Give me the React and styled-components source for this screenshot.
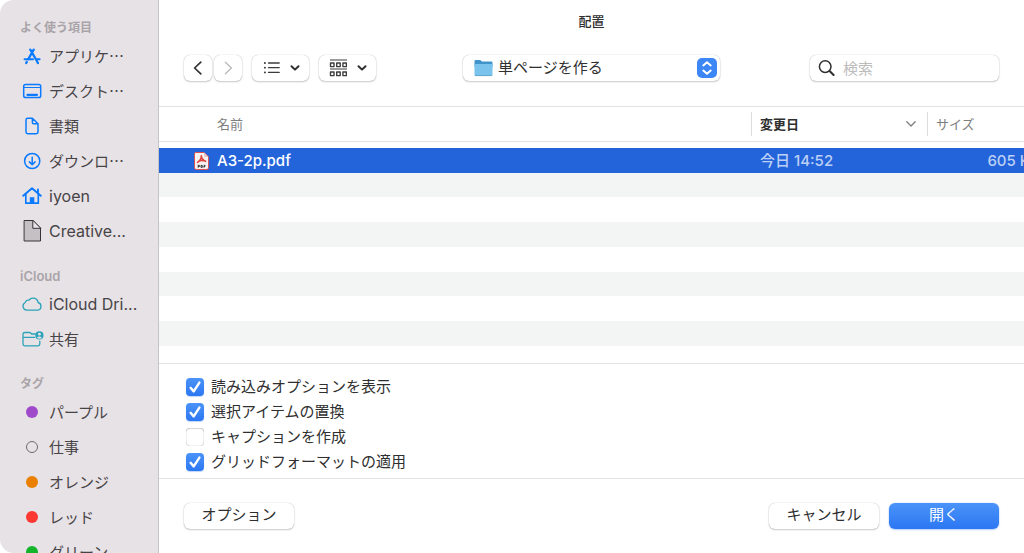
import { useState } from 'react'
import styled, { createGlobalStyle, css } from 'styled-components'

const colors = {
  sidebar: '#e7e2e6',
  text: '#2f2f2f',
  sidebarText: '#474447',
  muted: '#a9a4a8',
  line: '#e3e3e3',
  stripe: '#f3f5f4',
  selected: '#2464da',
  blue: '#0a7aff',
  teal: '#2ba3b8',
}

const latinFont = `Inter, 'Noto Sans CJK JP', sans-serif`
const japaneseFont = `'Noto Sans CJK JP', Inter, sans-serif`

const GlobalStyle = createGlobalStyle`
  * {
    box-sizing: border-box;
  }
  body {
    margin: 0;
    background: #ffffff;
    color: ${colors.text};
    font-family: ${latinFont};
    font-size: 15px;
  }
  button, input, select {
    font: inherit;
    color: inherit;
  }
`

const Dialog = styled.div`
  display: flex;
  height: 100vh;
  overflow: hidden;
  background: #ffffff;
`

const Sidebar = styled.nav`
  flex: 0 0 159px;
  display: flex;
  flex-direction: column;
  gap: 18px;
  padding: 18px 16px 0 20px;
  overflow: hidden;
  background: ${colors.sidebar};
  border-right: 1px solid #c6c3c7;
  border-radius: 14px 0 0 14px;
`

const SidebarSection = styled.section`
  flex: none;
`

const SidebarHeading = styled.h2`
  margin: 0;
  font-size: ${({ $latin }) => ($latin ? '13px' : '12px')};
  font-weight: 600;
  line-height: 20px;
  color: ${colors.muted};
`

const SidebarList = styled.ul`
  margin: 0;
  padding: 0;
  list-style: none;
`

const SidebarLink = styled.a`
  display: flex;
  align-items: center;
  gap: 5px;
  height: 35px;
  font-family: ${({ $japanese }) => ($japanese ? japaneseFont : latinFont)};
  font-size: ${({ $japanese }) => ($japanese ? '15px' : '16px')};
  line-height: 20px;
  white-space: nowrap;
  color: ${colors.sidebarText};
  text-decoration: none;
  svg {
    flex: none;
  }
`

const TagDot = styled.span`
  flex: none;
  width: 12px;
  height: 12px;
  margin: 0 6px;
  border-radius: 50%;
  background: ${({ $color }) => $color || 'transparent'};
  border: ${({ $color }) => ($color ? 'none' : '1px solid #6f6c70')};
`

const Main = styled.main`
  flex: 1;
  min-width: 0;
  display: flex;
  flex-direction: column;
`

const Header = styled.header`
  padding: 12px 25px 25px;
  border-bottom: 1px solid ${colors.line};
`

const Title = styled.h1`
  margin: 0 0 25px;
  font-size: 13px;
  font-weight: 500;
  line-height: 18px;
  text-align: center;
`

const Toolbar = styled.div`
  display: grid;
  grid-template-columns: 1fr 257px 1fr;
  align-items: center;
`

const ToolGroup = styled.div`
  display: flex;
  gap: ${({ $gap }) => $gap};
`

const raised = css`
  background: #ffffff;
  border: none;
  border-radius: 6px;
  box-shadow: 0 0 1px rgba(0, 0, 0, 0.3), 0 1px 2px rgba(0, 0, 0, 0.2);
`

const ToolButton = styled.button`
  ${raised}
  display: flex;
  align-items: center;
  justify-content: center;
  gap: 10px;
  width: ${({ $wide }) => ($wide ? '57px' : '28px')};
  height: 26px;
  padding: 0;
  color: ${colors.text};
  &:disabled {
    color: #bdbdbd;
  }
`

const FolderPicker = styled.label`
  position: relative;
  display: block;
  svg {
    position: absolute;
    pointer-events: none;
  }
  svg:first-child {
    top: 4px;
    left: 11px;
  }
  svg:last-child {
    top: 3px;
    right: 3px;
  }
`

const FolderSelect = styled.select`
  ${raised}
  appearance: none;
  display: block;
  width: 100%;
  height: 26px;
  padding: 0 32px 2px 35px;
`

const SearchField = styled.label`
  ${raised}
  justify-self: end;
  display: flex;
  align-items: center;
  gap: 8px;
  width: 189px;
  height: 26px;
  padding: 0 8px;
  input {
    flex: 1;
    min-width: 0;
    padding: 0;
    border: none;
    outline: none;
    background: none;
  }
  input::placeholder {
    color: #bcbcbc;
  }
`

const FileArea = styled.div`
  height: 257px;
  overflow: hidden;
  border-bottom: 1px solid ${colors.line};
`

const FileTable = styled.table`
  width: calc(100% + 16px);
  table-layout: fixed;
  border-collapse: separate;
  border-spacing: 0;
  font-weight: 500;
`

const NameCol = styled.col`
  width: auto;
`

const DateCol = styled.col`
  width: 176px;
`

const SizeCol = styled.col`
  width: 113px;
`

const HeadCell = styled.th`
  height: 35px;
  padding: ${({ $first }) => ($first ? '0 0 0 58px' : '0')};
  border-bottom: 1px solid ${colors.line};
  font-size: 13px;
  font-weight: ${({ $sorted }) => ($sorted ? 700 : 400)};
  line-height: 24px;
  text-align: left;
  color: ${({ $sorted }) => ($sorted ? colors.text : '#7e7e7e')};
`

const HeadLabel = styled.span`
  display: flex;
  align-items: center;
  justify-content: space-between;
  padding: 0 10px 0 8px;
  border-left: 1px solid #dcdcdc;
`

const FileBody = styled.tbody`
  &::before {
    content: '';
    display: table-row;
    height: 6px;
  }
`

const FileRow = styled.tr`
  height: 25px;
  background: ${({ $selected }) => ($selected ? colors.selected : 'transparent')};
  &:nth-child(even) {
    background: ${colors.stripe};
  }
  &:nth-child(4n + 2) {
    height: 24px;
  }
`

const FileCell = styled.td`
  padding: 0 0 0 ${({ $name }) => ($name ? '35px' : '9px')};
  line-height: 24px;
  white-space: nowrap;
  color: ${({ $name }) => ($name ? '#ffffff' : '#bdd0f5')};
  text-align: ${({ $right }) => ($right ? 'right' : 'left')};
`

const FileName = styled.span`
  display: flex;
  align-items: center;
  gap: 8px;
`

const Options = styled.div`
  padding: 10px 27px 4px;
  border-bottom: 1px solid ${colors.line};
`

const OptionLabel = styled.label`
  display: flex;
  align-items: center;
  gap: 7px;
  height: 25px;
  line-height: 24px;
`

const CheckMark = styled.span`
  position: relative;
  width: 18px;
  height: 18px;
  input {
    appearance: none;
    display: block;
    width: 18px;
    height: 18px;
    margin: 0;
    border-radius: 4px;
    background: #ffffff;
    box-shadow: inset 0 0 1px rgba(0, 0, 0, 0.5), inset 0 1px 1px rgba(0, 0, 0, 0.12);
  }
  input:checked {
    background: linear-gradient(#4a93f8, #2c77f3);
    box-shadow: 0 1px 1px rgba(44, 119, 243, 0.3);
  }
  svg {
    position: absolute;
    inset: 0;
    pointer-events: none;
  }
`

const Footer = styled.footer`
  display: flex;
  justify-content: space-between;
  padding: 24px 25px;
`

const PushButton = styled.button`
  ${raised}
  width: 110px;
  height: 26px;
  padding: 0 0 2px;
  line-height: 24px;
  ${({ $primary }) =>
    $primary &&
    css`
      color: #ffffff;
      background: linear-gradient(#4a93f8, #2c77f3);
      box-shadow: 0 0 1px rgba(44, 119, 243, 0.6), 0 1px 2px rgba(44, 119, 243, 0.3);
    `}
`

function Icon({ width = 24, height = 24, color = colors.blue, children }) {
  return (
    <svg
      width={width}
      height={height}
      viewBox={`0 0 ${width} ${height}`}
      fill="none"
      stroke={color}
      strokeWidth="1.5"
      strokeLinecap="round"
      strokeLinejoin="round"
      aria-hidden="true"
    >
      {children}
    </svg>
  )
}

const icons = {
  apps: (
    <Icon>
      <path d="M10.3 5.6 16.9 17M13.7 5.6 8.2 15.2M6.8 17.9 6.2 19M17.2 17.7 17.9 19" strokeWidth="2.3" />
      <path d="M4.6 15.2H13M17.2 15.2H19.6" strokeWidth="2.1" />
    </Icon>
  ),
  desktop: (
    <Icon>
      <rect x="3.7" y="5.4" width="17" height="13.2" rx="1.8" />
      <path d="M4 8.5H20.4" strokeWidth="1.2" />
      <path d="M7.4 15.8H17" strokeWidth="2.2" />
    </Icon>
  ),
  document: (
    <Icon>
      <path d="M12.4 4.2H7.7Q6 4.2 6 5.9V18Q6 19.7 7.7 19.7H16.3Q18 19.7 18 18V9.7ZM12.4 4.2V8.4Q12.4 9.7 13.7 9.7H18" />
    </Icon>
  ),
  download: (
    <Icon>
      <circle cx="12.2" cy="12" r="7.6" />
      <path d="M12.2 8.2V15.5M9.4 12.9 12.2 15.7 15 12.9" />
    </Icon>
  ),
  home: (
    <Icon>
      <path d="M3.2 11.8 12 4.3 20.8 11.8M18 5.4V9" strokeWidth="1.9" />
      <path d="M5.8 10.6V19.2H18.3V10.6" strokeWidth="1.7" />
      <path d="M9.8 19.6V13.2H14.3V19.6Z" fill={colors.blue} stroke="none" />
    </Icon>
  ),
  file: (
    <Icon color="#373438">
      <path d="M4.5 1.5H12.8L20.5 9.3V22H4.5Z" fill="#c5c0c4" strokeWidth="1" />
      <path d="M12.8 1.5V9.3H20.5Z" fill="#e8e4e7" strokeWidth="1" />
    </Icon>
  ),
  cloud: (
    <Icon color={colors.teal}>
      <path d="M6.8 18.1A4 4 0 0 1 5.3 10.5 2.9 2.9 0 0 1 8.9 8.2 5.1 5.1 0 0 1 18.1 10.5 3.9 3.9 0 0 1 17.8 18.1Z" strokeWidth="1.3" />
    </Icon>
  ),
  shared: (
    <Icon color={colors.teal}>
      <path d="M15.3 7H11.6L10.1 5.5H4.8Q3 5.5 3 7.3V17Q3 18.8 4.8 18.8H18Q19.8 18.8 19.8 17V14.2M3.2 10.4H14.6" strokeWidth="1.3" />
      <circle cx="19.4" cy="8.4" r="4.1" fill={colors.teal} stroke="none" />
      <circle cx="19.4" cy="7.2" r="1.4" fill={colors.sidebar} stroke="none" />
      <path d="M16.9 10.8Q19.4 8.2 21.9 10.8Q19.4 12.8 16.9 10.8Z" fill={colors.sidebar} stroke="none" />
    </Icon>
  ),
}

const places = [
  { label: 'アプリケ…', icon: 'apps', japanese: true },
  { label: 'デスクト…', icon: 'desktop', japanese: true },
  { label: '書類', icon: 'document', japanese: true },
  { label: 'ダウンロ…', icon: 'download', japanese: true },
  { label: 'iyoen', icon: 'home' },
  { label: 'Creative...', icon: 'file' },
]

const cloudPlaces = [
  { label: 'iCloud Dri...', icon: 'cloud' },
  { label: '共有', icon: 'shared', japanese: true },
]

const tags = [
  { label: 'パープル', color: '#9f4bc9' },
  { label: '仕事' },
  { label: 'オレンジ', color: '#ea8000' },
  { label: 'レッド', color: '#fc3830' },
  { label: 'グリーン', color: '#15b52b' },
]

const initialOptions = [
  { label: '読み込みオプションを表示', checked: true },
  { label: '選択アイテムの置換', checked: true },
  { label: 'キャプションを作成', checked: false },
  { label: 'グリッドフォーマットの適用', checked: true },
]

const emptyRows = [1, 2, 3, 4, 5, 6, 7]

function PlaceSection({ title, latin, items }) {
  return (
    <SidebarSection>
      <SidebarHeading $latin={latin}>{title}</SidebarHeading>
      <SidebarList>
        {items.map(({ label, icon, japanese }) => (
          <li key={label}>
            <SidebarLink href="#" $japanese={japanese}>
              {icons[icon]}
              {label}
            </SidebarLink>
          </li>
        ))}
      </SidebarList>
    </SidebarSection>
  )
}

function MenuChevron() {
  return (
    <Icon width={10} height={8} color={colors.text}>
      <path d="M1.5 2.2 5 5.6 8.5 2.2" strokeWidth="2" />
    </Icon>
  )
}

function PdfIcon() {
  return (
    <svg width="15" height="18" viewBox="0 0 15 18" aria-hidden="true">
      <path d="M1.8.5H10L14.5 5V15.8Q14.5 17.5 12.8 17.5H2.2Q.5 17.5.5 15.8V1.8Q.5.5 1.8.5Z" fill="#f7f3f3" stroke="#d9534f" />
      <path d="M10 .5V5H14.5Z" fill="#f2c6c3" />
      <path d="M7.2 3.8Q7.6 7.2 11.6 9.4M7.4 4Q7.4 7.6 3.6 10.4M4.4 9.4Q7.2 7.8 11.4 9" fill="none" stroke="#e0433c" strokeWidth="1.6" strokeLinecap="round" />
      <path d="M4.2 12.9V15.7M4.2 13.4H5.6V14.5H4.2M7 13.4V15.4H8.3V13.4ZM10 15.7V13.4H11.5M10 14.5H11.2" fill="none" stroke="#3a3a3a" strokeWidth="1" />
    </svg>
  )
}

function App() {
  const [options, setOptions] = useState(initialOptions)

  const toggleOption = (index) =>
    setOptions(options.map((option, i) => (i === index ? { ...option, checked: !option.checked } : option)))

  return (
    <Dialog lang="ja">
      <GlobalStyle />
      <Sidebar>
        <PlaceSection title="よく使う項目" items={places} />
        <PlaceSection title="iCloud" latin items={cloudPlaces} />
        <SidebarSection>
          <SidebarHeading>タグ</SidebarHeading>
          <SidebarList>
            {tags.map(({ label, color }) => (
              <li key={label}>
                <SidebarLink href="#" $japanese>
                  <TagDot $color={color} />
                  {label}
                </SidebarLink>
              </li>
            ))}
          </SidebarList>
        </SidebarSection>
      </Sidebar>
      <Main>
        <Header>
          <Title>配置</Title>
          <Toolbar>
            <ToolGroup $gap="10px">
              <ToolGroup $gap="2px">
                <ToolButton aria-label="戻る">
                  <Icon width={12} height={16} color="currentColor">
                    <path d="M8.8 2.2 2.6 8 8.8 13.8" strokeWidth="1.7" />
                  </Icon>
                </ToolButton>
                <ToolButton aria-label="進む" disabled>
                  <Icon width={12} height={16} color="currentColor">
                    <path d="M3.4 2.2 9.4 8 3.4 13.8" />
                  </Icon>
                </ToolButton>
              </ToolGroup>
              <ToolButton $wide aria-label="リスト表示">
                <Icon width={18} height={14} color="#3c3c3c">
                  <path d="M6.5 2H17.2M6.5 6.7H17.2M6.5 11.4H17.2" strokeWidth="1.3" />
                  <path d="M2.8 2H3M2.8 6.7H3M2.8 11.4H3" strokeWidth="1.8" />
                </Icon>
                <MenuChevron />
              </ToolButton>
              <ToolButton $wide aria-label="グループ分け">
                <Icon width={18} height={18} color="#3c3c3c">
                  <path d="M1 1H18M1 10H18" strokeWidth="1.2" strokeLinecap="butt" />
                  <path
                    d="M1.5 4H5V7.6H1.5ZM7.7 4H11.2V7.6H7.7ZM13.9 4H17.4V7.6H13.9ZM1.5 13H5V16.6H1.5ZM7.7 13H11.2V16.6H7.7ZM13.9 13H17.4V16.6H13.9Z"
                    strokeWidth="1.4"
                  />
                </Icon>
                <MenuChevron />
              </ToolButton>
            </ToolGroup>
            <FolderPicker>
              <svg width="19" height="18" viewBox="0 0 19 18" aria-hidden="true">
                <path d="M.5 2.2Q.5 1 1.7 1H6.3L8 2.6H17.3Q18.5 2.6 18.5 3.8V8H.5Z" fill="#3f94c9" />
                <path d="M.5 5H18.5V15.6Q18.5 17 17.1 17H1.9Q.5 17 .5 15.6Z" fill="#79c3ec" />
                <path d="M.8 16.6H18.2" stroke="#5a9fc6" strokeWidth=".8" />
              </svg>
              <FolderSelect aria-label="フォルダ">
                <option>単ページを作る</option>
              </FolderSelect>
              <svg width="20" height="20" viewBox="0 0 20 20" aria-hidden="true">
                <rect width="20" height="20" rx="5" fill="#3c86f6" />
                <path d="M6.3 7.4 10 4.2 13.7 7.4M6.3 12.6 10 15.8 13.7 12.6" fill="none" stroke="#ffffff" strokeWidth="2" strokeLinecap="round" strokeLinejoin="round" />
              </svg>
            </FolderPicker>
            <SearchField>
              <Icon width={17} height={18} color={colors.text}>
                <circle cx="7.2" cy="7.6" r="5.8" />
                <path d="M11.6 12 15.6 16" strokeWidth="2" />
              </Icon>
              <input type="search" placeholder="検索" aria-label="検索" />
            </SearchField>
          </Toolbar>
        </Header>
        <FileArea>
          <FileTable>
            <colgroup>
              <NameCol />
              <DateCol />
              <SizeCol />
            </colgroup>
            <thead>
              <tr>
                <HeadCell $first>名前</HeadCell>
                <HeadCell $sorted>
                  <HeadLabel>
                    変更日
                    <Icon width={12} height={8} color="#7e7e7e">
                      <path d="M1.8 1.8 6 6 10.2 1.8" strokeWidth="1.3" />
                    </Icon>
                  </HeadLabel>
                </HeadCell>
                <HeadCell>
                  <HeadLabel>サイズ</HeadLabel>
                </HeadCell>
              </tr>
            </thead>
            <FileBody>
              <FileRow $selected>
                <FileCell $name>
                  <FileName>
                    <PdfIcon />
                    A3-2p.pdf
                  </FileName>
                </FileCell>
                <FileCell>今日 14:52</FileCell>
                <FileCell $right>605 KB</FileCell>
              </FileRow>
              {emptyRows.map((row) => (
                <FileRow key={row}>
                  <td colSpan={3} />
                </FileRow>
              ))}
            </FileBody>
          </FileTable>
        </FileArea>
        <Options>
          {options.map(({ label, checked }, index) => (
            <OptionLabel key={label}>
              <CheckMark>
                <input type="checkbox" checked={checked} onChange={() => toggleOption(index)} />
                {checked && (
                  <Icon width={18} height={18} color="#ffffff">
                    <path d="M4.6 9.8 7.7 13.4 13.4 4.6" strokeWidth="2.4" />
                  </Icon>
                )}
              </CheckMark>
              {label}
            </OptionLabel>
          ))}
        </Options>
        <Footer>
          <PushButton>オプション</PushButton>
          <ToolGroup $gap="10px">
            <PushButton>キャンセル</PushButton>
            <PushButton $primary>開く</PushButton>
          </ToolGroup>
        </Footer>
      </Main>
    </Dialog>
  )
}

export default App
